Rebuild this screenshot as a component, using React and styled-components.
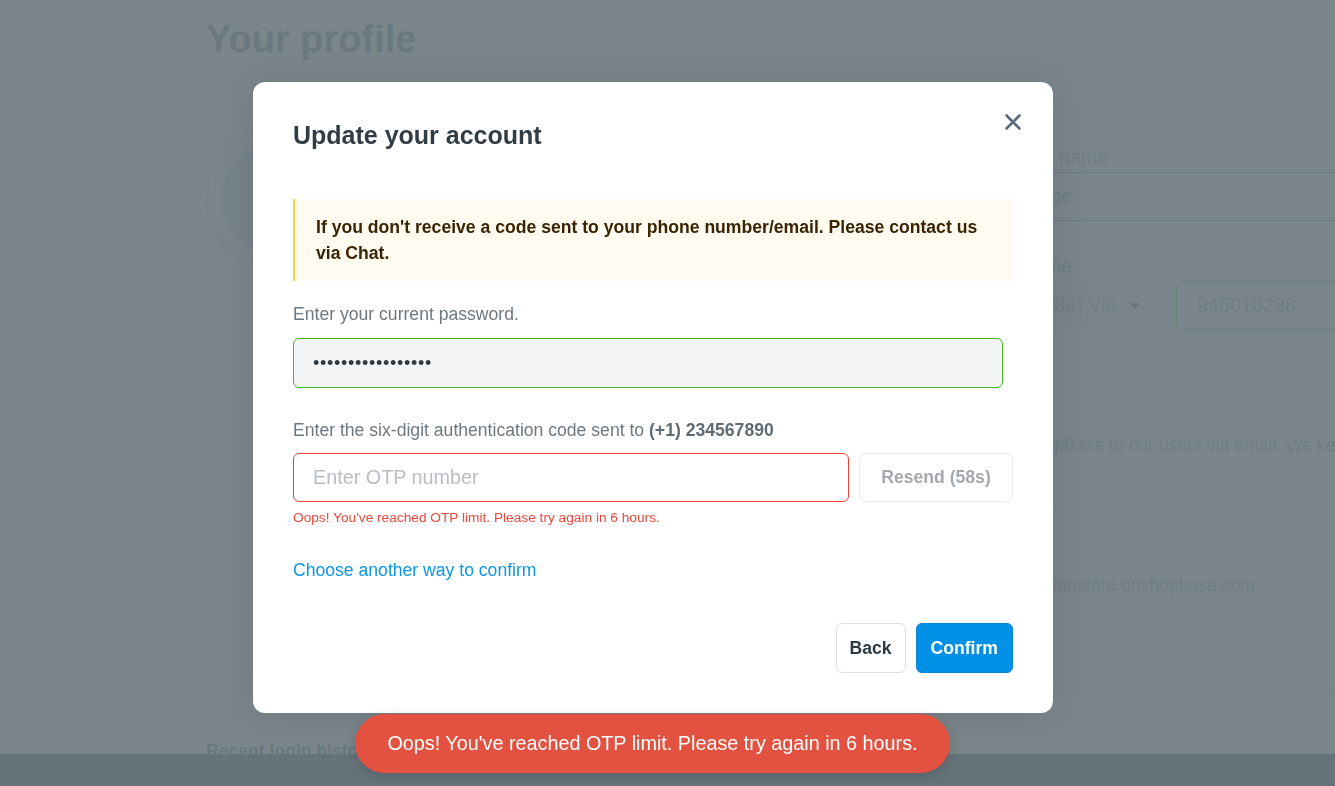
import React from "react";
import styled, { createGlobalStyle } from "styled-components";

const GlobalStyle = createGlobalStyle`
  html, body {
    margin: 0;
    padding: 0;
    height: 100%;
    overflow: hidden;
    background: #ffffff;
    font-family: "Liberation Sans", Arial, sans-serif;
  }
  * {
    box-sizing: border-box;
  }
`;

/* ---------- page behind the dialog ---------- */

const Page = styled.div`
  height: 786px;
  padding: 13px 0 0 206px;
  overflow: hidden;
  color: #212b36;
`;

const PageHeader = styled.div`
  border-top: 1px solid #dfe3e8;
  border-bottom: 1px solid #dfe3e8;
  height: 56px;
  padding-top: 6px;
  h1 {
    margin: 0;
    font-size: 38px;
    line-height: 38px;
    font-weight: 700;
    color: #6a7581;
  }
`;

const ProfileRow = styled.div`
  display: flex;
`;

const AvatarCol = styled.div`
  flex: 0 0 809px;
  padding-top: 58px;
`;

const Avatar = styled.div`
  width: 142px;
  height: 142px;
  border-radius: 50%;
  border: 2px solid #d9dee3;
  display: flex;
  align-items: center;
  justify-content: center;
  &::after {
    content: "";
    width: 112px;
    height: 112px;
    border-radius: 50%;
    background: #d6dce1;
  }
`;

const FormCol = styled.div`
  flex: 1;
  min-width: 0;
  overflow: hidden;
  padding-top: 76px;
  padding-bottom: 93px;
  border-bottom: 1px solid #d7dce1;
`;

const FieldLabel = styled.div`
  font-size: 19.8px;
  line-height: 24px;
  color: #8a949e;
  white-space: nowrap;
  margin-top: ${(p) => p.$top || 0}px;
`;

const FieldRow = styled.div`
  display: flex;
  gap: 21px;
  margin-top: 3px;
`;

const FakeInput = styled.div`
  height: 49px;
  flex: ${(p) => (p.$w ? `0 0 ${p.$w}px` : "0 0 400px")};
  border: 1px solid ${(p) => (p.$plain ? "#e9ecef" : "#44b820")};
  background: ${(p) => (p.$plain ? "#f1f3f5" : "#ffffff")};
  border-radius: 8px;
  display: flex;
  align-items: center;
  gap: 14px;
  padding: 0 20px;
  font-size: 19.8px;
  color: #9aa3aa;
  white-space: nowrap;
  overflow: hidden;
`;

const Caret = styled.span`
  width: 0;
  height: 0;
  border-left: 5px solid transparent;
  border-right: 5px solid transparent;
  border-top: 6px solid #4f5963;
`;

const BodyText = styled.div`
  font-size: 17.6px;
  line-height: 22px;
  color: #8a949e;
  white-space: nowrap;
  margin-top: ${(p) => p.$top}px;
  padding-left: ${(p) => p.$indent || 0}px;
`;

const Divider = styled.div`
  border-top: 1px solid #d7dce1;
  margin-top: ${(p) => p.$top}px;
`;

const SectionTitle = styled.div`
  margin-top: 25px;
  font-size: 17.6px;
  line-height: 22px;
  font-weight: 700;
  color: #5f6a75;
`;

const BottomBar = styled.div`
  position: fixed;
  left: 0;
  right: 0;
  bottom: 0;
  height: 32px;
  background: #67737b;
  z-index: 2;
`;

/* ---------- dialog ---------- */

const Overlay = styled.div`
  position: fixed;
  inset: 0;
  background: rgba(108, 121, 126, 0.9);
  z-index: 1;
`;

const DialogLayer = styled.div`
  position: fixed;
  inset: 0;
  z-index: 3;
  padding: 82px 29px 0 0;
  display: flex;
  flex-direction: column;
  align-items: center;
`;

const Modal = styled.div`
  position: relative;
  width: 800px;
  background: #ffffff;
  border-radius: 12px;
  padding: 40px;
  box-shadow: 0 0 40px rgba(0, 0, 0, 0.1);
`;

const Title = styled.h2`
  margin: 0;
  font-size: 25px;
  line-height: 27px;
  font-weight: 700;
  color: #313c45;
`;

const CloseButton = styled.button`
  position: absolute;
  top: 30px;
  right: 30px;
  width: 20px;
  height: 20px;
  padding: 0;
  border: 0;
  background: none;
  cursor: pointer;
  display: flex;
`;

const Notice = styled.div`
  margin-top: 50px;
  background: #fffbf1;
  border-left: 2px solid #f8d33a;
  padding: 15px 20px 15px 21px;
  font-size: 17.6px;
  line-height: 26px;
  font-weight: 700;
  color: #3a2402;
`;

const Label = styled.div`
  margin-top: ${(p) => p.$top}px;
  font-size: 17.6px;
  line-height: 20px;
  color: #6d7881;
  b {
    color: #5f6b74;
  }
`;

const Input = styled.input`
  display: block;
  height: ${(p) => p.$h || 50}px;
  width: ${(p) => (p.$w ? `${p.$w}px` : "100%")};
  flex: ${(p) => (p.$w ? "none" : 1)};
  border-radius: 6px;
  border: 1px solid ${(p) => (p.$error ? "#e4473a" : "#44b61f")};
  background: ${(p) => (p.$error ? "#ffffff" : "#f4f5f6")};
  padding: 0 19px;
  font-family: "Liberation Sans", Arial, sans-serif;
  font-size: ${(p) => (p.$error ? "19.8px" : "18px")};
  letter-spacing: ${(p) => (p.$error ? "0" : "0.7px")};
  color: #2f3a43;
  outline: none;
  &::placeholder {
    color: #b8bec3;
  }
`;

const PasswordWrap = styled.div`
  margin-top: 14px;
`;

const OtpRow = styled.div`
  margin-top: 13px;
  display: flex;
  gap: 10px;
`;

const Button = styled.button`
  height: ${(p) => p.$h || 50}px;
  padding: 0 ${(p) => p.$px || 14}px;
  border-radius: 6px;
  font-family: "Liberation Sans", Arial, sans-serif;
  font-size: 17.6px;
  font-weight: 700;
  cursor: pointer;
  border: 1px solid
    ${(p) => (p.$primary ? "#0a86d2" : p.$muted ? "#e8eaec" : "#dcdfe2")};
  background: ${(p) => (p.$primary ? "#0091e6" : "#ffffff")};
  color: ${(p) => (p.$primary ? "#ffffff" : p.$muted ? "#a3a9ae" : "#2c3a45")};
`;

const ErrorText = styled.div`
  margin-top: 7px;
  font-size: 13.7px;
  line-height: 18px;
  color: #e8493c;
`;

const LinkText = styled.a`
  display: block;
  margin-top: 33px;
  font-size: 17.6px;
  line-height: 20px;
  color: #0e95e6;
  text-decoration: none;
  cursor: pointer;
`;

const Footer = styled.div`
  margin-top: 43px;
  display: flex;
  justify-content: flex-end;
  gap: 10px;
`;

const Toast = styled.div`
  position: fixed;
  bottom: 13px;
  left: 355px;
  width: 595px;
  height: 59px;
  border-radius: 30px;
  background: #e35241;
  color: #ffffff;
  font-size: 19.8px;
  display: flex;
  align-items: center;
  justify-content: center;
  box-shadow: 0 4px 14px rgba(0, 0, 0, 0.15);
  z-index: 4;
`;

const CloseIcon = () => (
  <svg width="20" height="20" viewBox="0 0 20 20" fill="none">
    <path
      d="M3.5 3.5 L16.5 16.5 M16.5 3.5 L3.5 16.5"
      stroke="#5f6b74"
      strokeWidth="2.6"
      strokeLinecap="round"
    />
  </svg>
);

const BackgroundPage = () => (
  <Page>
    <PageHeader>
      <h1>Your profile</h1>
    </PageHeader>
    <ProfileRow>
      <AvatarCol>
        <Avatar />
      </AvatarCol>
      <FormCol>
        <FieldLabel>First name</FieldLabel>
        <FieldRow>
          <FakeInput>Doe</FakeInput>
        </FieldRow>
        <FieldLabel $top={33}>Phone</FieldLabel>
        <FieldRow>
          <FakeInput $w={140} $plain>
            (+84) Vie <Caret />
          </FakeInput>
          <FakeInput>946010298</FakeInput>
        </FieldRow>
        <BodyText $top={104} $indent={8}>
          ShopBase to our users via email. We keep your information safe.
        </BodyText>
        <Divider $top={55} />
        <BodyText $top={62} $indent={18}>
          demostore.onshopbase.com
        </BodyText>
      </FormCol>
    </ProfileRow>
    <Divider $top={24} />
    <SectionTitle>Recent login history</SectionTitle>
  </Page>
);

export default function App() {
  return (
    <>
      <GlobalStyle />
      <BackgroundPage />
      <Overlay />
      <BottomBar />
      <DialogLayer>
        <Modal>
          <Title>Update your account</Title>
          <CloseButton aria-label="Close">
            <CloseIcon />
          </CloseButton>
          <Notice>
            If you don't receive a code sent to your phone number/email. Please
            contact us via Chat.
          </Notice>
          <Label $top={23}>Enter your current password.</Label>
          <PasswordWrap>
            <Input
              type="password"
              $w={710}
              defaultValue="abcdefghijklmnopq"
              readOnly
            />
          </PasswordWrap>
          <Label $top={32}>
            Enter the six-digit authentication code sent to{" "}
            <b>(+1) 234567890</b>
          </Label>
          <OtpRow>
            <Input $error $h={49} placeholder="Enter OTP number" />
            <Button $muted $h={49} style={{ width: 154 }}>
              Resend (58s)
            </Button>
          </OtpRow>
          <ErrorText>
            Oops! You've reached OTP limit. Please try again in 6 hours.
          </ErrorText>
          <LinkText>Choose another way to confirm</LinkText>
          <Footer>
            <Button $px={13}>Back</Button>
            <Button $primary $px={14}>
              Confirm
            </Button>
          </Footer>
        </Modal>
      </DialogLayer>
      <Toast>Oops! You've reached OTP limit. Please try again in 6 hours.</Toast>
    </>
  );
}
